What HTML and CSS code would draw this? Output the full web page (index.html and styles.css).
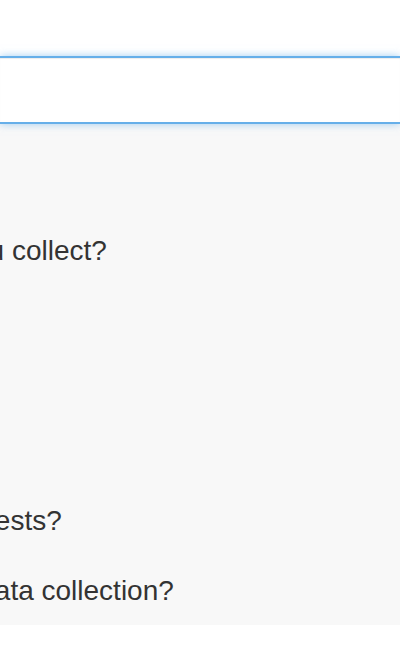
FILE: index.html
```html
<!DOCTYPE html>
<html lang="en">
<head>
<meta charset="utf-8">
<title>FAQ</title>
<link rel="stylesheet" href="styles.css">
</head>
<body>
  <div class="search-bar">
    <input class="search-input" type="text" aria-label="Search questions">
  </div>
  <section class="faq">
    <ul class="faq-list">
      <li class="faq-item faq-item--open">What stats do you collect?</li>
      <li class="faq-item">Can I delete requests?</li>
      <li class="faq-item">Can I opt out of data collection?</li>
    </ul>
  </section>
</body>
</html>
```

FILE: styles.css
```css
html, body {
  margin: 0;
  padding: 0;
  background: #ffffff;
  overflow: hidden;
}

body {
  font-family: "Liberation Sans", Arial, Helvetica, sans-serif;
  color: #333333;
}

.search-bar {
  padding-top: 56px;
}

.search-input {
  display: block;
  box-sizing: border-box;
  width: 100%;
  height: 68px;
  margin: 0;
  padding: 0 16px;
  border: 0;
  border-top: 2px solid #66afe9;
  border-bottom: 2px solid #66afe9;
  background: #ffffff;
  outline: none;
  box-shadow: inset 0 1px 1px rgba(0, 0, 0, 0.075), 0 0 8px rgba(102, 175, 233, 0.6);
  font: inherit;
  position: relative;
  z-index: 1;
}

.faq {
  box-sizing: border-box;
  height: 501px;
  background: #f8f8f8;
  padding-top: 110px;
}

.faq-list {
  list-style: none;
  margin: 0 0 0 -220px;
  padding: 0;
  white-space: nowrap;
}

.faq-item {
  font-size: 28px;
  line-height: 34px;
  margin-bottom: 36px;
}

.faq-item--open {
  margin-bottom: 236px;
}
```
